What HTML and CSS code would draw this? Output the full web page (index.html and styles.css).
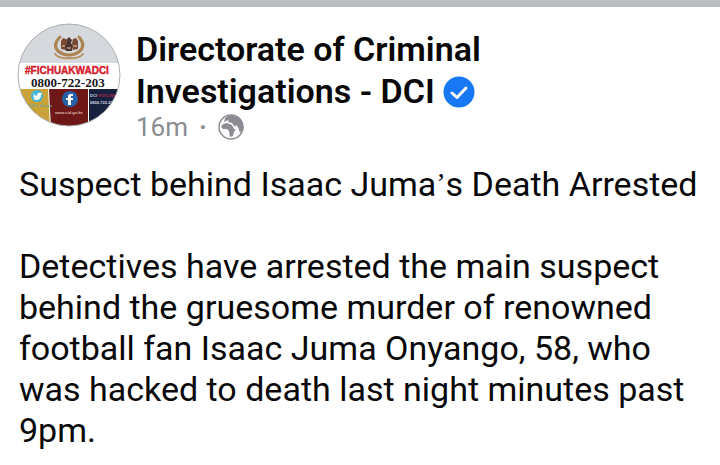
FILE: index.html
```html
<!DOCTYPE html>
<html lang="en">
<head>
<meta charset="utf-8">
<meta name="viewport" content="width=device-width, initial-scale=1">
<title>Directorate of Criminal Investigations - DCI</title>
<link rel="stylesheet" href="styles.css">
</head>
<body>
<article class="post">
  <header class="post-header">
    <svg class="avatar" viewBox="0 0 104 104" role="img" aria-label="DCI profile picture">
      <defs><clipPath id="disc"><circle cx="52" cy="52" r="51"/></clipPath></defs>
      <g clip-path="url(#disc)">
        <rect width="104" height="104" fill="#fff"/>
        <rect width="104" height="40" fill="#d5d8dc"/>
        <path d="M0 66H31L33 104H0Z" fill="#c9a33a"/>
        <path d="M32 66H71V104H34Z" fill="#6d1716"/>
        <path d="M72 66H104V104H72Z" fill="#17213f"/>
        <g fill="none" stroke-linecap="round">
          <path d="M43 14Q35 22 41 28Q46 32 52 32Q58 32 63 28Q69 22 62 14" stroke="#ab8451" stroke-width="3"/>
          <path d="M38 31Q42 36 52 35Q62 36 66 31" stroke="#b99261" stroke-width="2"/>
        </g>
        <path d="M44 18L46 15L49 16L50 20L49 27L44 26ZM61 18L59 15L56 16L55 20L56 27L61 26Z" fill="#7a4a33"/>
        <path d="M52 14L55 17L54 20L56 23L55 28H49L48 23L50 20L49 17Z" fill="#4f3531"/>
        <path d="M45 23H48M56 23H60M50 25H54" stroke="#e0cbb8" stroke-width="1"/>
        <text class="avatar-tag" x="8" y="51">#FICHUAKWADCI</text>
        <text class="avatar-phone" x="14" y="64">0800-722-203</text>
        <circle cx="20" cy="73" r="6" fill="#41b4d8"/>
        <path d="M16 70Q18 73 20 73Q20 69 23 70L25 70L24 72Q24 77 19 77L16 76L18 75L16 74L17 73Z" fill="#fff"/>
        <circle cx="53" cy="76" r="8" fill="#2660a8"/>
        <path d="M56 71H54Q51 71 51 73V75H49V77H51V82H54V77H56V75H54V73H56Z" fill="#fff"/>
        <text class="avatar-small" x="73" y="74"><tspan fill="#c8cbdd">DCI</tspan><tspan fill="#a82c54"> HOTLINE</tspan></text>
        <text class="avatar-small" x="73" y="81" fill="#d9dae3">0800-722-203</text>
        <text class="avatar-small" x="10" y="84" fill="#77a490">@DCI_Kenya</text>
        <text class="avatar-small" x="38" y="91" fill="#dbb7ac">www.cid.go.ke</text>
      </g>
      <circle cx="52" cy="52" r="51" fill="none" stroke="#aeb0b3"/>
    </svg>
    <div class="identity">
      <h1 class="name">Directorate of Criminal Investigations - DCI
        <svg class="verified" viewBox="0 0 32 32" role="img" aria-label="Verified"><circle cx="16" cy="16" r="15.5" fill="#1877f2"/><path d="M9 17L14 21.500L23 12" fill="none" stroke="#fff" stroke-width="3" stroke-linecap="round" stroke-linejoin="round"/></svg>
      </h1>
      <div class="meta">
        <time>16m</time><span class="dot">·</span>
        <svg class="globe" viewBox="0 0 26 26" role="img" aria-label="Public"><circle cx="13" cy="13" r="12" fill="#fff" stroke="#8b8d92" stroke-width="1.500"/><path d="M7 4Q10 1 14 1L22 4Q26 9 25 15L22 19L20 13L18 11L17 13L14 9L10 8L11 6L8 7L6 8ZM5 10L9 9L14 11L16 15L18 15L16 18L15 22L12 23L11 17L9 15L5 15L3 13Z" fill="#8b8d92"/></svg>
      </div>
    </div>
  </header>
  <div class="body">
    <p>Suspect behind Isaac Juma<span class="mark">’</span>s Death Arrested</p>
    <p>Detectives have arrested the main suspect behind the gruesome murder of renowned football fan Isaac Juma Onyango, 58, who was hacked to death last night minutes past 9pm.</p>
  </div>
</article>
</body>
</html>
```
FILE: styles.css
```css
* {
  box-sizing: border-box;
}

body {
  margin: 0;
  background: #fff;
  color: #080809;
  font-family: Roboto, "Liberation Sans", sans-serif;
}

.post {
  border-top: 7px solid #babec1;
  padding: 16px 17px;
}

.post-header {
  display: flex;
  gap: 15px;
}

.avatar {
  flex: none;
  width: 104px;
  height: 104px;
}

.avatar-tag {
  fill: #d5202d;
  stroke: #d5202d;
  stroke-width: 0.4px;
  font: bold 10px "Liberation Sans", sans-serif;
}

.avatar-phone {
  fill: #17171c;
  font: bold 13px "Liberation Serif", serif;
}

.avatar-small {
  font: bold 4px "Liberation Sans", sans-serif;
}

.identity {
  max-width: 400px;
  padding-top: 5px;
}

.name {
  margin: 0;
  font-size: 34px;
  font-weight: 600;
  line-height: 42px;
}

.verified {
  width: 32px;
  height: 32px;
  vertical-align: -5px;
}

.meta {
  display: flex;
  align-items: center;
  gap: 11px;
  color: #8b8d92;
  font-size: 26px;
  line-height: 30px;
}

.dot {
  font-weight: 700;
}

.globe {
  width: 26px;
  height: 26px;
}

.body {
  padding: 22px 0 0 2px;
  font-size: 34px;
  line-height: 41px;
}

.body p {
  margin: 0 0 41px;
}

.body p:last-child {
  margin-bottom: 0;
}

.mark {
  font-family: "Liberation Serif", serif;
  font-size: 28px;
  line-height: 1;
  vertical-align: 4px;
}
```
